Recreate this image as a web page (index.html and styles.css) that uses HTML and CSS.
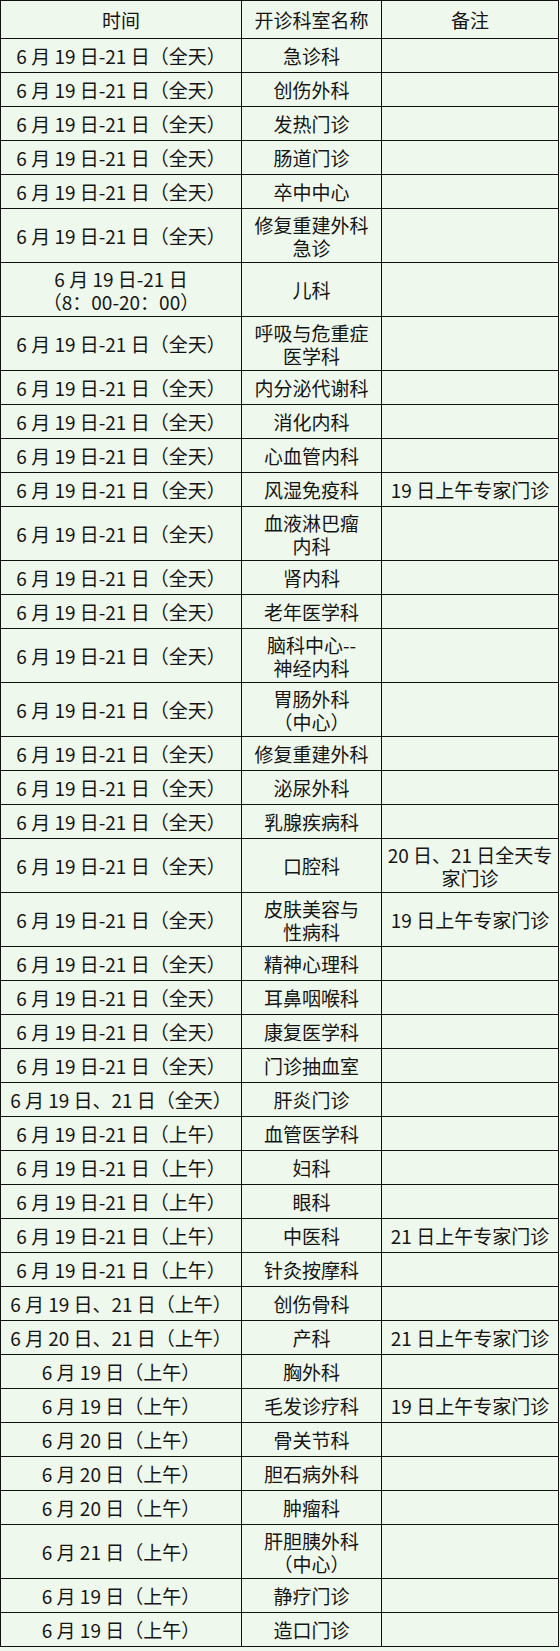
FILE: index.html
```html
<!DOCTYPE html>
<html lang="zh">
<head>
<meta charset="utf-8">
<link rel="stylesheet" href="styles.css">
</head>
<body>
<table class="sched">
<colgroup><col class="c1"><col class="c2"><col class="c3"></colgroup>
<thead>
<tr class="hd"><th>时间</th><th>开诊科室名称</th><th>备注</th></tr>
</thead>
<tbody>
<tr><td>6 月 19 日-21 日（全天）</td><td>急诊科</td><td></td></tr>
<tr><td>6 月 19 日-21 日（全天）</td><td>创伤外科</td><td></td></tr>
<tr><td>6 月 19 日-21 日（全天）</td><td>发热门诊</td><td></td></tr>
<tr><td>6 月 19 日-21 日（全天）</td><td>肠道门诊</td><td></td></tr>
<tr><td>6 月 19 日-21 日（全天）</td><td>卒中中心</td><td></td></tr>
<tr class="dbl"><td>6 月 19 日-21 日（全天）</td><td>修复重建外科<br>急诊</td><td></td></tr>
<tr class="dbl"><td>6 月 19 日-21 日<br>（8：00-20：00）</td><td>儿科</td><td></td></tr>
<tr class="dbl"><td>6 月 19 日-21 日（全天）</td><td>呼吸与危重症<br>医学科</td><td></td></tr>
<tr><td>6 月 19 日-21 日（全天）</td><td>内分泌代谢科</td><td></td></tr>
<tr><td>6 月 19 日-21 日（全天）</td><td>消化内科</td><td></td></tr>
<tr><td>6 月 19 日-21 日（全天）</td><td>心血管内科</td><td></td></tr>
<tr><td>6 月 19 日-21 日（全天）</td><td>风湿免疫科</td><td>19 日上午专家门诊</td></tr>
<tr class="dbl"><td>6 月 19 日-21 日（全天）</td><td>血液淋巴瘤<br>内科</td><td></td></tr>
<tr><td>6 月 19 日-21 日（全天）</td><td>肾内科</td><td></td></tr>
<tr><td>6 月 19 日-21 日（全天）</td><td>老年医学科</td><td></td></tr>
<tr class="dbl"><td>6 月 19 日-21 日（全天）</td><td>脑科中心--<br>神经内科</td><td></td></tr>
<tr class="dbl"><td>6 月 19 日-21 日（全天）</td><td>胃肠外科<br>（中心）</td><td></td></tr>
<tr><td>6 月 19 日-21 日（全天）</td><td>修复重建外科</td><td></td></tr>
<tr><td>6 月 19 日-21 日（全天）</td><td>泌尿外科</td><td></td></tr>
<tr><td>6 月 19 日-21 日（全天）</td><td>乳腺疾病科</td><td></td></tr>
<tr class="dbl"><td>6 月 19 日-21 日（全天）</td><td>口腔科</td><td>20 日、21 日全天专<br>家门诊</td></tr>
<tr class="dbl"><td>6 月 19 日-21 日（全天）</td><td>皮肤美容与<br>性病科</td><td>19 日上午专家门诊</td></tr>
<tr><td>6 月 19 日-21 日（全天）</td><td>精神心理科</td><td></td></tr>
<tr><td>6 月 19 日-21 日（全天）</td><td>耳鼻咽喉科</td><td></td></tr>
<tr><td>6 月 19 日-21 日（全天）</td><td>康复医学科</td><td></td></tr>
<tr><td>6 月 19 日-21 日（全天）</td><td>门诊抽血室</td><td></td></tr>
<tr><td>6 月 19 日、21 日（全天）</td><td>肝炎门诊</td><td></td></tr>
<tr><td>6 月 19 日-21 日（上午）</td><td>血管医学科</td><td></td></tr>
<tr><td>6 月 19 日-21 日（上午）</td><td>妇科</td><td></td></tr>
<tr><td>6 月 19 日-21 日（上午）</td><td>眼科</td><td></td></tr>
<tr><td>6 月 19 日-21 日（上午）</td><td>中医科</td><td>21 日上午专家门诊</td></tr>
<tr><td>6 月 19 日-21 日（上午）</td><td>针灸按摩科</td><td></td></tr>
<tr><td>6 月 19 日、21 日（上午）</td><td>创伤骨科</td><td></td></tr>
<tr><td>6 月 20 日、21 日（上午）</td><td>产科</td><td>21 日上午专家门诊</td></tr>
<tr><td>6 月 19 日（上午）</td><td>胸外科</td><td></td></tr>
<tr><td>6 月 19 日（上午）</td><td>毛发诊疗科</td><td>19 日上午专家门诊</td></tr>
<tr><td>6 月 20 日（上午）</td><td>骨关节科</td><td></td></tr>
<tr><td>6 月 20 日（上午）</td><td>胆石病外科</td><td></td></tr>
<tr><td>6 月 20 日（上午）</td><td>肿瘤科</td><td></td></tr>
<tr class="dbl"><td>6 月 21 日（上午）</td><td>肝胆胰外科<br>（中心）</td><td></td></tr>
<tr><td>6 月 19 日（上午）</td><td>静疗门诊</td><td></td></tr>
<tr><td>6 月 19 日（上午）</td><td>造口门诊</td><td></td></tr>
</tbody>
</table>
</body>
</html>
```
FILE: styles.css
```css
html, body {
  margin: 0;
  padding: 0;
  background: #eff8ec;
}
.sched {
  border-collapse: collapse;
  table-layout: fixed;
  width: 558px;
  font-family: "Noto Sans CJK SC", "Noto Sans", sans-serif;
  font-size: 19px;
  color: #151515;
  background: #eff8ec;
}
.c1 { width: 241px; }
.c2 { width: 140px; }
.c3 { width: 177px; }
.sched th,
.sched td {
  border: 1px solid #111;
  padding: 0;
  text-align: center;
  vertical-align: middle;
  line-height: 23px;
  font-weight: normal;
  white-space: nowrap;
  height: 33px;
}
.sched .hd th {
  height: 37px;
}
.sched .dbl td {
  height: 53px;
}
```
